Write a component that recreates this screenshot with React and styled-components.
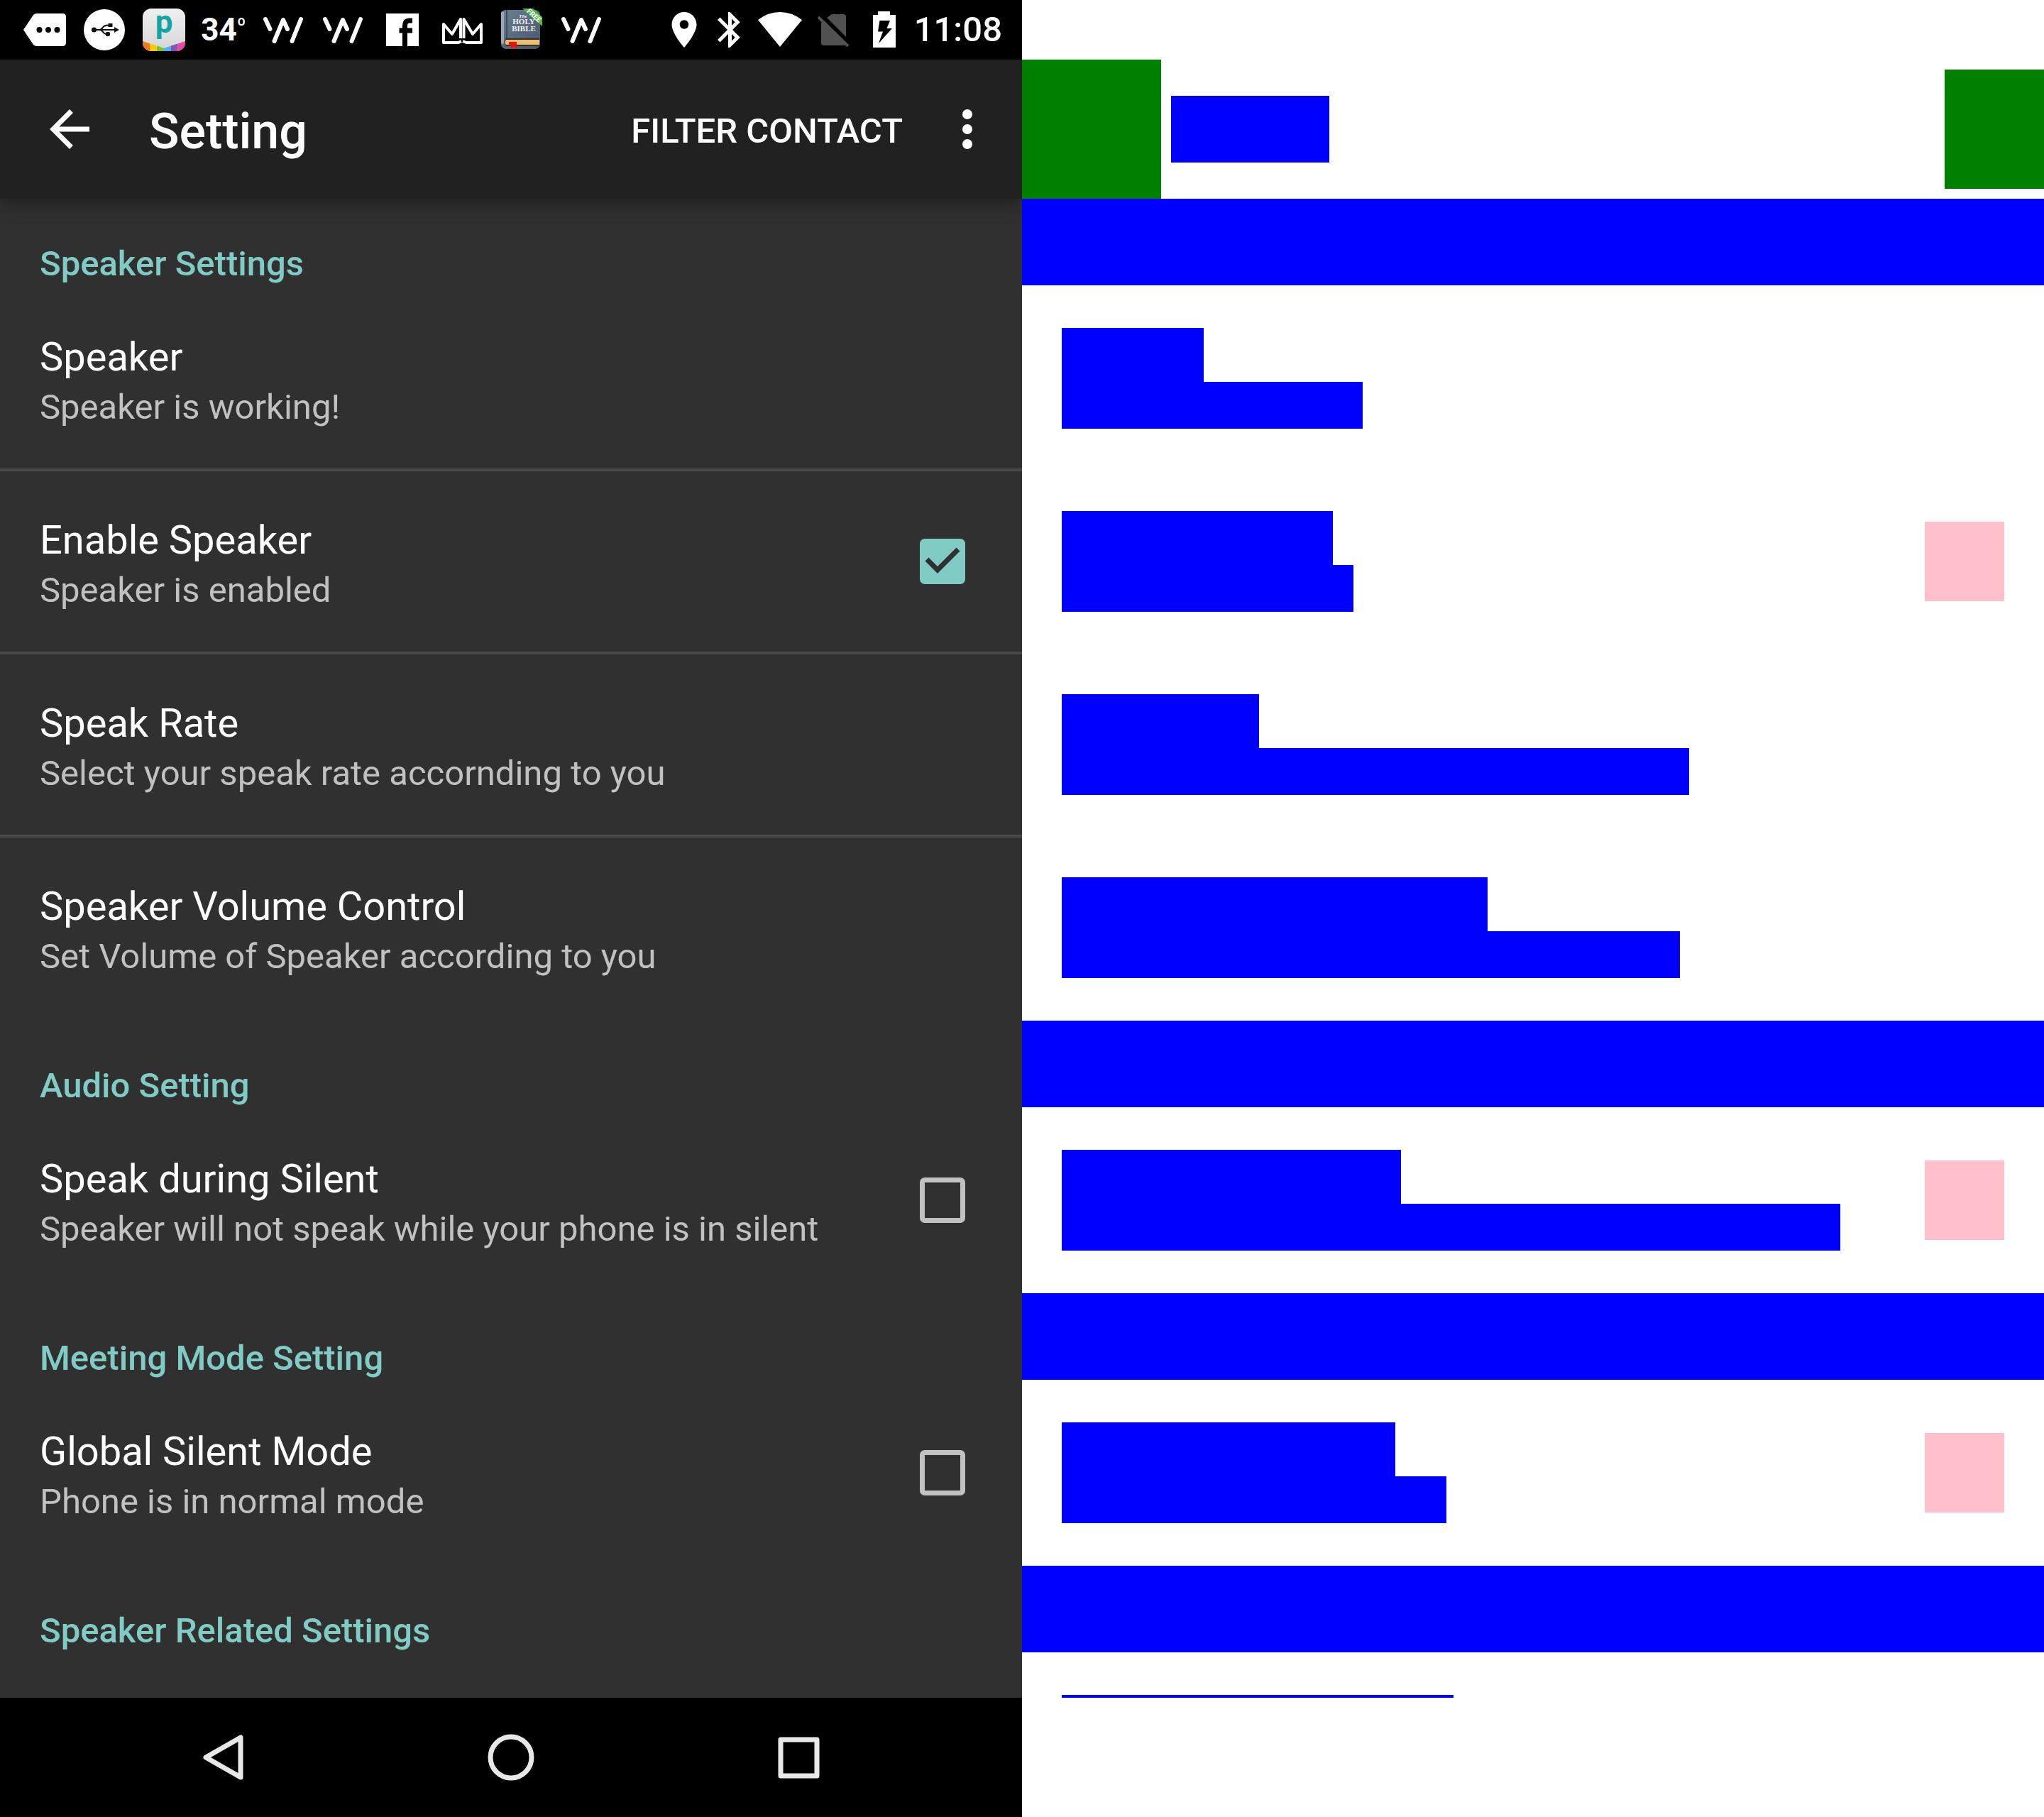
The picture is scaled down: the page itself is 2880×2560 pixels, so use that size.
import React from "react";
import styled, { createGlobalStyle } from "styled-components";

const GlobalStyle = createGlobalStyle`
  *, *::before, *::after { box-sizing: border-box; }
  body { margin: 0; background: #fff; font-family: Roboto, "Noto Sans", sans-serif; }
  button, input { font: inherit; color: inherit; }
`;

const Page = styled.div`
  display: grid;
  grid-template-columns: 1fr 1fr;
  min-height: 100vh;
`;

const Pane = styled.div`
  display: flex;
  flex-direction: column;
  min-width: 0;
  overflow: hidden;
  background: ${(p) => p.$bg};
`;

const StatusBar = styled.div`
  display: flex;
  justify-content: space-between;
  height: 84px;
  padding: 0 28px 0 21px;
  background: ${(p) => p.$bg};
  color: #fff;
`;

const StatusGroup = styled.div`
  display: flex;
  align-items: center;
`;

const Temperature = styled.span`
  display: flex;
  justify-content: center;
  width: 84px;
  font-size: 44px;
  line-height: 52px;
  font-weight: 700;
`;

const Degree = styled.span`
  font-size: 28px;
  line-height: 40px;
  font-weight: 500;
`;

const Clock = styled.time`
  padding-left: 4px;
  font-size: 49px;
  line-height: 56px;
  font-weight: 500;
`;

const Toolbar = styled.header`
  position: relative;
  display: flex;
  align-items: center;
  height: 196px;
  background: ${(p) => p.$bg};
  box-shadow: ${(p) => (p.$raised ? "0 8px 24px rgba(0, 0, 0, 0.35)" : "none")};
`;

const IconButton = styled.button`
  display: flex;
  align-items: center;
  justify-content: center;
  width: ${(p) => p.$width};
  height: 168px;
  padding: 0;
  border: 0;
  background: none;
  color: inherit;
`;

const ScreenTitle = styled.h1`
  flex: 1;
  margin: 0 0 0 14px;
  padding-top: 6px;
  color: #fff;
  font-size: 70px;
  line-height: 92px;
  font-weight: 500;
`;

const TextAction = styled.button`
  padding: 6px 28px 0;
  border: 0;
  background: none;
  color: #fff;
  font-size: 49px;
  line-height: 66px;
  font-weight: 500;
  white-space: nowrap;
`;

const Content = styled.main`
  flex: 1;
`;

const SectionTitle = styled.h2`
  margin: 0;
  padding: 62px 56px 0;
  color: #80cbc4;
  font-size: 49px;
  line-height: 60px;
  font-weight: 500;
`;

const List = styled.ul`
  margin: 0;
  padding: 4px 0;
  list-style: none;
`;

const ListItem = styled.li`
  &:not(:first-child) {
    border-top: 4px solid ${(p) => p.$divider};
  }
`;

const Row = styled.div`
  display: flex;
  align-items: center;
  justify-content: space-between;
  width: 100%;
  min-height: 254px;
  padding: 0 56px;
  border: 0;
  background: none;
  text-align: left;
`;

const RowText = styled.span`
  display: flex;
  flex-direction: column;
  padding-top: 6px;
`;

const RowTitle = styled.span`
  color: #fff;
  font-size: 56px;
  line-height: 76px;
`;

const RowSummary = styled.span`
  color: #c1c1c1;
  font-size: 49px;
  line-height: 66px;
`;

const CheckSlot = styled.span`
  display: grid;
  place-items: center;
  width: 112px;
  height: 64px;
  & > * { grid-area: 1 / 1; }
`;

const CheckInput = styled.input`
  appearance: none;
  width: 64px;
  height: 64px;
  margin: 0;
  border: 7px solid #c1c1c1;
  border-radius: 7px;
  &:checked {
    border-color: #80cbc4;
    background: #80cbc4;
  }
  & + svg { visibility: hidden; pointer-events: none; }
  &:checked + svg { visibility: visible; }
`;

const NavBar = styled.nav`
  display: grid;
  grid-template-columns: repeat(3, 1fr);
  justify-items: center;
  padding: 0 113px;
  background: #000;
  color: #e8e8e8;
`;

/* Wireframe pieces */

const Block = styled.div`
  width: ${(p) => p.$w};
  height: ${(p) => p.$h};
  margin-left: ${(p) => p.$gap || "0"};
  background: ${(p) => p.$color};
`;

const Spacer = styled.div`
  flex: 1;
`;

const CutRow = styled.div`
  padding: 60px 56px 0;
`;

/* Icons */

const Glyph = ({ w = 84, h = 84, children, ...rest }) => (
  <svg width={w} height={h} viewBox={`0 0 ${w} ${h}`} fill="currentColor" aria-hidden="true" {...rest}>
    {children}
  </svg>
);

const MoreIcon = () => (
  <Glyph>
    <path d="M12 42 L26 21 Q28 19 31 19 H67 Q72 19 72 24 V60 Q72 65 67 65 H31 Q28 65 26 63 Z" />
    <g fill="#000">
      <circle cx="34.5" cy="42" r="4" />
      <circle cx="47" cy="42" r="4" />
      <circle cx="59.5" cy="42" r="4" />
    </g>
  </Glyph>
);

const UsbIcon = () => (
  <Glyph>
    <circle cx="42" cy="42" r="29" />
    <g fill="#111">
      <circle cx="27.5" cy="42" r="3.6" />
      <path d="M56 38 L63 42 L56 46 Z" />
      <rect x="47.5" y="33" width="6" height="5" />
      <circle cx="47" cy="48" r="3.2" />
    </g>
    <path d="M27 42 H57 M34 42 Q38 42 40 38.5 Q42 35.5 48 35.5 M36 42 Q38 42 40 45 Q42 48 46 48" fill="none" stroke="#111" strokeWidth="2" />
  </Glyph>
);

const AppIcon = () => (
  <Glyph>
    <defs>
      <linearGradient id="appFace" x1="0" y1="0" x2="0" y2="1">
        <stop offset="0" stopColor="#f0f0f0" />
        <stop offset="1" stopColor="#d6d6d6" />
      </linearGradient>
      <clipPath id="appShape">
        <rect x="12" y="12" width="60" height="60" rx="12" />
      </clipPath>
    </defs>
    <g clipPath="url(#appShape)">
      <rect x="12" y="12" width="60" height="60" fill="url(#appFace)" />
      <path d="M12 58 L22.5 61.5 V72 H12 Z" fill="#f57c12" />
      <path d="M22.5 61.5 L32 64.6 V72 H22.5 Z" fill="#ffca05" />
      <path d="M32 64.6 L42 68 V72 H32 Z" fill="#7ac92e" />
      <path d="M42 68 L52 64.6 V72 H42 Z" fill="#4fb3f6" />
      <path d="M52 64.6 L61.5 61.5 V72 H52 Z" fill="#8a52b8" />
      <path d="M61.5 61.5 L72 58 V72 H61.5 Z" fill="#ea4aa4" />
    </g>
    <text x="42" y="46" textAnchor="middle" fontFamily="Roboto, sans-serif" fontSize="44" fontWeight="700" fill="#12a5a5">p</text>
  </Glyph>
);

const WaveIcon = () => (
  <Glyph fill="none" stroke="currentColor" strokeWidth="6" strokeLinecap="round" strokeLinejoin="round">
    <path d="M17 27 L23.5 41 M29.5 58 L42 28 L48 41 M54.5 58 L67 27" />
  </Glyph>
);

const FacebookIcon = () => (
  <Glyph>
    <rect x="19" y="19" width="46" height="46" />
    <path d="M45.5 65 V36 Q45.5 29 52 29 H56 M37.5 43 H56" fill="none" stroke="#000" strokeWidth="7" />
  </Glyph>
);

const CrownIcon = () => (
  <Glyph fill="none" stroke="currentColor" strokeWidth="4" strokeLinejoin="round">
    <path d="M41 58 L37 60 H16 V34 L28 48 L40 27 V54" />
    <path d="M43 58 L48 60 H69 V34 L57 48 L44.500 27 V54" />
  </Glyph>
);

const BibleIcon = () => (
  <Glyph>
    <defs>
      <linearGradient id="cover" x1="0" y1="0" x2="1" y2="1">
        <stop offset="0" stopColor="#6f7f92" />
        <stop offset="1" stopColor="#46566a" />
      </linearGradient>
      <clipPath id="bookShape">
        <rect x="13" y="12" width="58" height="60" rx="2" />
      </clipPath>
    </defs>
    <rect x="13" y="14" width="55" height="55" rx="7" fill="url(#cover)" />
    <rect x="13" y="16" width="4" height="46" rx="2" fill="#9aa8b8" />
    <rect x="20" y="14" width="2" height="42" fill="#3c4a5c" />
    <path d="M20 54 H67 V65 H20 Q15 60 20 54 Z" fill="#3a2f2a" />
    <path d="M20 56 H67 V63 H20 Q17 60 20 56 Z" fill="#ebbf6c" />
    <path d="M24 59 H35 V69 L31 66 L27 68 V65 L24 64 Z" fill="#ee1111" />
    <g fill="#eef2f6" fontFamily="'Liberation Serif', serif" fontWeight="700" textAnchor="middle">
      <text x="44" y="25" fontSize="7" fontStyle="italic">The</text>
      <text x="45" y="34" fontSize="11">HOLY</text>
      <text x="45" y="44" fontSize="11">BIBLE</text>
    </g>
    <g clipPath="url(#bookShape)">
      <path d="M43 12 H58 L71 24 V37 Z" fill="#55b947" />
      <text x="59" y="25" fontSize="10" fontWeight="700" fontFamily="Roboto, sans-serif" textAnchor="middle" fill="#fff" transform="rotate(42 59 22)">FREE</text>
    </g>
  </Glyph>
);

const LocationIcon = () => (
  <Glyph w={64} h={60} viewBox="-0.8 0 25.6 24">
    <path d="M12 2C8.130 2 5 5.130 5 9c0 5.250 7 13 7 13s7-7.750 7-13c0-3.870-3.130-7-7-7zm0 9.500c-1.380 0-2.500-1.120-2.500-2.500s1.120-2.500 2.500-2.500 2.500 1.120 2.500 2.500-1.120 2.500-2.500 2.500z" />
  </Glyph>
);

const BluetoothIcon = () => (
  <Glyph w={62} h={60} viewBox="-1 0 24.8 24">
    <path d="M17.710 7.710L12 2h-1v7.590L6.410 5 5 6.410 10.590 12 5 17.590 6.410 19 11 14.410V22h1l5.710-5.710-4.300-4.290 4.300-4.290zM13 5.830l1.880 1.880L13 9.590V5.830zm1.880 10.460L13 18.170v-3.760l1.880 1.880z" />
  </Glyph>
);

const WifiIcon = () => (
  <Glyph w={82}>
    <path d="M41 66 L10 28 Q24 17 41 17 Q58 17 72 28 Z" />
  </Glyph>
);

const NoSimIcon = () => (
  <Glyph w={68}>
    <path d="M32 20 H48 Q52 20 52 24 V60 Q52 64 48 64 H21 Q17 64 17 60 V32 L25 25 Z" fill="#515151" />
    <path d="M14 18 L60 64" stroke="#000" strokeWidth="6" />
    <path d="M13 24 L55 65" stroke="#515151" strokeWidth="4" />
  </Glyph>
);

const BatteryIcon = () => (
  <Glyph w={76}>
    <path d="M29 16 H46 V21 H54 V67 H22 V21 H29 Z" />
    <path d="M31.500 29 H46 L41.500 40 H49 L30 61 L36 44.500 H29 Z" fill="#000" />
  </Glyph>
);

const BackArrow = () => (
  <svg width="84" height="84" viewBox="0 0 24 24" fill="#fff" aria-hidden="true">
    <path d="M20 11H7.830l5.590-5.590L12 4l-8 8 8 8 1.410-1.410L7.830 13H20v-2z" />
  </svg>
);

const OverflowIcon = () => (
  <Glyph fill="#fff">
    <circle cx="35" cy="21" r="7" />
    <circle cx="35" cy="42" r="7" />
    <circle cx="35" cy="63" r="7" />
  </Glyph>
);

const CheckMark = () => (
  <Glyph w={64} h={64}>
    <path d="M10 29 L25 44 L54 15" fill="none" stroke="#303030" strokeWidth="7" />
  </Glyph>
);

const NavBackIcon = () => (
  <Glyph fill="none" stroke="currentColor" strokeWidth="7" strokeLinejoin="round">
    <path d="M66 14 V70 L17 42 Z" />
  </Glyph>
);

const NavHomeIcon = () => (
  <Glyph fill="none" stroke="currentColor" strokeWidth="7">
    <circle cx="42" cy="42" r="29" />
  </Glyph>
);

const NavRecentIcon = () => (
  <Glyph fill="none" stroke="currentColor" strokeWidth="7" strokeLinejoin="round">
    <rect x="17" y="17" width="51" height="51" />
  </Glyph>
);

/* Each row also carries the widths of its title and summary boxes in the wireframe. */
const sections = [
  {
    title: "Speaker Settings",
    rows: [
      { title: "Speaker", summary: "Speaker is working!", boxes: [200, 424] },
      { title: "Enable Speaker", summary: "Speaker is enabled", check: true, on: true, boxes: [382, 411] },
      { title: "Speak Rate", summary: "Select your speak rate accornding to you", boxes: [278, 884] },
      { title: "Speaker Volume Control", summary: "Set Volume of Speaker according to you", boxes: [600, 871] },
    ],
  },
  {
    title: "Audio Setting",
    rows: [
      { title: "Speak during Silent", summary: "Speaker will not speak while your phone is in silent", check: true, boxes: [478, 1097] },
    ],
  },
  {
    title: "Meeting Mode Setting",
    rows: [
      { title: "Global Silent Mode", summary: "Phone is in normal mode", check: true, boxes: [470, 542] },
    ],
  },
  { title: "Speaker Related Settings", rows: [] },
];

function SettingRow({ row }) {
  const text = (
    <RowText>
      <RowTitle>{row.title}</RowTitle>
      <RowSummary>{row.summary}</RowSummary>
    </RowText>
  );
  if (!row.check) {
    return <Row as="button" type="button">{text}</Row>;
  }
  return (
    <Row as="label">
      {text}
      <CheckSlot>
        <CheckInput type="checkbox" defaultChecked={row.on} />
        <CheckMark />
      </CheckSlot>
    </Row>
  );
}

function Phone() {
  return (
    <Pane $bg="#303030">
      <StatusBar $bg="#000">
        <StatusGroup>
          <MoreIcon />
          <UsbIcon />
          <AppIcon />
          <Temperature>34<Degree>º</Degree></Temperature>
          <WaveIcon />
          <WaveIcon />
          <FacebookIcon />
          <CrownIcon />
          <BibleIcon />
          <WaveIcon />
        </StatusGroup>
        <StatusGroup>
          <LocationIcon />
          <BluetoothIcon />
          <WifiIcon />
          <NoSimIcon />
          <BatteryIcon />
          <Clock>11:08</Clock>
        </StatusGroup>
      </StatusBar>
      <Toolbar $bg="#212121" $raised>
        <IconButton type="button" aria-label="Back" $width="196px"><BackArrow /></IconButton>
        <ScreenTitle>Setting</ScreenTitle>
        <TextAction type="button">FILTER CONTACT</TextAction>
        <IconButton type="button" aria-label="More options" $width="140px"><OverflowIcon /></IconButton>
      </Toolbar>
      <Content>
        {sections.map((section) => (
          <section key={section.title}>
            <SectionTitle>{section.title}</SectionTitle>
            {section.rows.length > 0 && (
              <List>
                {section.rows.map((row) => (
                  <ListItem key={row.title} $divider="#4a4a4a">
                    <SettingRow row={row} />
                  </ListItem>
                ))}
              </List>
            )}
          </section>
        ))}
      </Content>
      <NavBar>
        <IconButton type="button" aria-label="Back" $width="168px"><NavBackIcon /></IconButton>
        <IconButton type="button" aria-label="Home" $width="168px"><NavHomeIcon /></IconButton>
        <IconButton type="button" aria-label="Recent apps" $width="168px"><NavRecentIcon /></IconButton>
      </NavBar>
    </Pane>
  );
}

function Wireframe() {
  return (
    <Pane $bg="#fff" aria-hidden="true">
      <StatusBar $bg="#fff" />
      <Toolbar $bg="#fff">
        <Block $color="green" $w="196px" $h="196px" />
        <Block $color="blue" $w="223px" $h="94px" $gap="14px" />
        <Spacer />
        <Block $color="green" $w="140px" $h="168px" />
      </Toolbar>
      {sections.map((section) => (
        <div key={section.title}>
          <Block $color="blue" $w="100%" $h="122px" />
          {section.rows.length > 0 ? (
            <List as="div">
              {section.rows.map((row) => (
                <ListItem as="div" key={row.title} $divider="transparent">
                  <Row>
                    <div>
                      <Block $color="blue" $w={`${row.boxes[0]}px`} $h="76px" />
                      <Block $color="blue" $w={`${row.boxes[1]}px`} $h="66px" />
                    </div>
                    {row.check && <Block $color="pink" $w="112px" $h="112px" />}
                  </Row>
                </ListItem>
              ))}
            </List>
          ) : (
            <CutRow>
              <Block $color="blue" $w="552px" $h="4px" />
            </CutRow>
          )}
        </div>
      ))}
    </Pane>
  );
}

export default function App() {
  return (
    <>
      <GlobalStyle />
      <Page>
        <Phone />
        <Wireframe />
      </Page>
    </>
  );
}
